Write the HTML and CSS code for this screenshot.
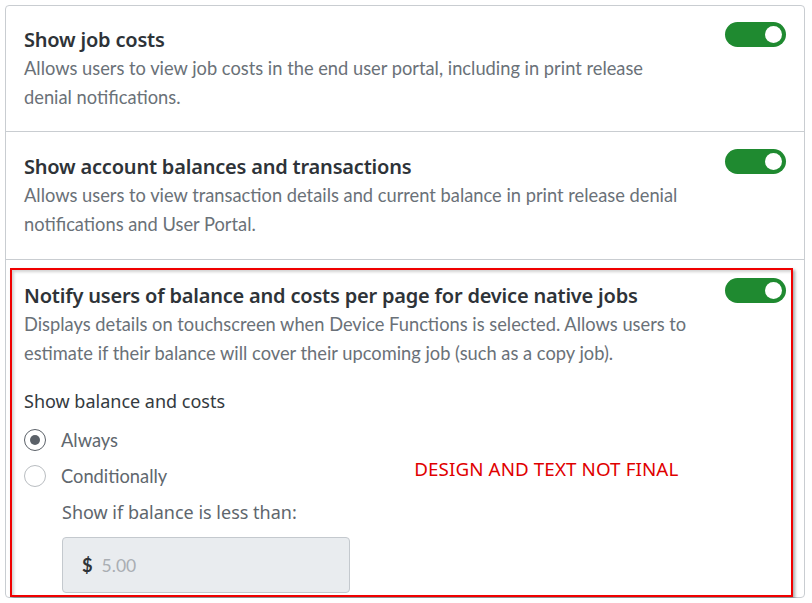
FILE: index.html
```html
<!DOCTYPE html>
<html lang="en">
<head>
<meta charset="utf-8">
<title>Settings</title>
<link rel="stylesheet" href="styles.css">
</head>
<body>
<div class="card">
  <section class="setting setting--first">
    <div class="setting__text">
      <h3 class="setting__title">Show job costs</h3>
      <p class="setting__desc">Allows users to view job costs in the end user portal, including in print release denial notifications.</p>
    </div>
    <span class="toggle"><span class="toggle__knob"></span></span>
  </section>
  <section class="setting setting--second">
    <div class="setting__text">
      <h3 class="setting__title">Show account balances and transactions</h3>
      <p class="setting__desc">Allows users to view transaction details and current balance in print release denial notifications and User Portal.</p>
    </div>
    <span class="toggle"><span class="toggle__knob"></span></span>
  </section>
  <section class="setting-wrap">
    <div class="annot">
      <div class="setting setting--inner">
        <div class="setting__text">
          <h3 class="setting__title">Notify users of balance and costs per page for device native jobs</h3>
          <p class="setting__desc">Displays details on touchscreen when Device Functions is selected. Allows users to estimate if their balance will cover their upcoming job (such as a copy job).</p>
        </div>
        <span class="toggle"><span class="toggle__knob"></span></span>
      </div>
      <div class="options">
        <div class="options__label">Show balance and costs</div>
        <div class="options__list">
          <div class="radio-row">
            <span class="radio radio--on"></span>
            <span class="radio-row__text">Always</span>
          </div>
          <div class="radio-row">
            <span class="radio"></span>
            <span class="radio-row__text">Conditionally</span>
            <span class="note">DESIGN AND TEXT NOT FINAL</span>
          </div>
          <div class="sub-label">Show if balance is less than:</div>
          <div class="money-input">
            <span class="money-input__cur">$</span>
            <span class="money-input__val">5.00</span>
          </div>
        </div>
      </div>
    </div>
  </section>
</div>
</body>
</html>
```
FILE: styles.css
```css
* { box-sizing: border-box; }
html, body { margin: 0; padding: 0; background: #ffffff; }
body { padding: 5px 0 0 5px; }

.card {
  width: 800px;
  border: 1px solid #c9cdd1;
  border-radius: 4px;
  background: #fff;
}

.setting {
  display: flex;
  align-items: flex-start;
  padding: 19px 18px 19px 18px;
  border-bottom: 1px solid #c9cdd1;
}
.setting--second { padding-top: 20px; padding-bottom: 20px; }
.setting--inner { padding: 11px 5px 0 12px; border-bottom: none; }

.setting__text { width: 668px; }
.setting__title {
  margin: 0;
  font-family: "Noto Sans", sans-serif;
  font-weight: 600;
  font-size: 20px;
  letter-spacing: -0.2px;
  line-height: 29px;
  color: #2e3338;
}
.setting__desc {
  margin: 0;
  font-family: Lato, sans-serif;
  font-size: 18.3px;
  line-height: 29px;
  color: #6a7178;
}

.toggle {
  margin-left: auto;
  margin-top: -3px;
  width: 61px;
  height: 25px;
  border-radius: 13px;
  background: #1f8a30;
  display: flex;
  align-items: center;
  justify-content: flex-end;
  padding-right: 4px;
  flex: none;
}
.toggle__knob {
  width: 17px;
  height: 17px;
  border-radius: 50%;
  background: #fff;
}

.setting-wrap { padding: 8px 11px 0 4px; }
.annot {
  border: 2px solid #f00000;
  box-shadow: 2px 2px 3px rgba(0,0,0,0.35), inset 2px 2px 3px rgba(0,0,0,0.18);
  padding-bottom: 2px;
}

.options { padding-left: 12px; }
.options__label {
  margin-top: 19px;
  font-family: "Noto Sans", sans-serif;
  font-size: 18px;
  line-height: 29px;
  color: #343a40;
}
.options__list { margin-top: 6px; }

.radio-row {
  display: flex;
  align-items: center;
  height: 36px;
}
.radio {
  width: 22px;
  height: 22px;
  border-radius: 50%;
  border: 1.5px solid #b9bdc1;
  background: #fff;
  margin-right: 15px;
  display: flex;
  align-items: center;
  justify-content: center;
  flex: none;
}
.radio--on { border-color: #5b6168; }
.radio--on::after {
  content: "";
  width: 10px;
  height: 10px;
  border-radius: 50%;
  background: #5b6168;
}
.radio-row__text {
  font-family: Lato, sans-serif;
  font-size: 18.3px;
  color: #60676e;
}
.note {
  margin-left: 247px;
  margin-top: -14px;
  font-family: "Noto Sans", sans-serif;
  font-size: 18.8px;
  color: #e00000;
  letter-spacing: 0.1px;
}

.sub-label {
  height: 36px;
  line-height: 36px;
  padding-left: 38px;
  font-family: "Noto Sans", sans-serif;
  font-size: 18px;
  color: #5e666d;
}
.money-input {
  margin: 7px 0 0 38px;
  width: 288px;
  height: 56px;
  background: #e9ecef;
  border: 1px solid #c4c9ce;
  border-radius: 4px;
  display: flex;
  align-items: center;
  padding-left: 19px;
  font-family: Lato, sans-serif;
  font-size: 18.3px;
}
.money-input__cur { color: #2e3338; font-weight: 700; margin-right: 9px; }
.money-input__val { color: #a9aeb3; font-size: 17.5px; }
```
